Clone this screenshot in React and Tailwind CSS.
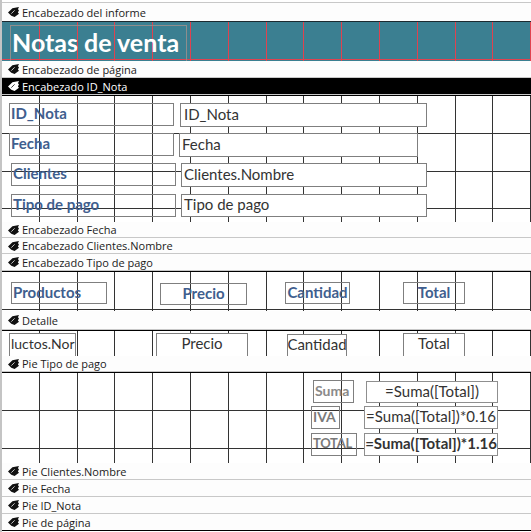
import React from 'react';

// x positions of the 1 cm grid lines (page coords, left strip is 2px)
const VX = [39, 77, 114, 152, 190, 228, 266, 303, 341, 379, 417, 455, 492, 530];

const Grid = ({ h, rows, color = '#333333' }) => (
  <svg className="absolute left-0 top-0 pointer-events-none" width="529" height={h}>
    {VX.map((x) => (
      <line key={'v' + x} x1={x - 2 + 0.5} y1="0" x2={x - 2 + 0.5} y2={h} stroke={color} strokeWidth="1" />
    ))}
    {rows.map((y) => (
      <line key={'h' + y} x1="0" y1={y + 0.5} x2="529" y2={y + 0.5} stroke={color} strokeWidth="1" />
    ))}
  </svg>
);

const SectionIcon = ({ white }) => (
  <svg width="11" height="10" viewBox="0 0 10 9" className="shrink-0">
    <path
      d="M0 5 L4 1 L10 0 L9 2 L10 3 L9 5 L10 6 L6 9 L3 8 Z"
      fill={white ? '#ffffff' : '#111111'}
    />
    <path d="M3 6 L6 3" stroke={white ? '#000000' : '#ffffff'} strokeWidth="0.7" />
  </svg>
);

const Bar = ({ children, className = '' }) => (
  <div className={'flex items-center gap-[3px] pl-[6px] bg-[#fdfdfd] text-[#1b1b1b] border-b border-[#c8c8c8] ' + className}>
    <SectionIcon />
    <span className="text-[11px] leading-none font-['Open_Sans',sans-serif]">{children}</span>
  </div>
);

// label and text box classes shared by the design canvas controls
const lbl = 'absolute border border-[#7f7f7f] flex items-center leading-none pb-[2px] font-bold whitespace-nowrap overflow-hidden';
const txt = 'absolute border border-[#7f7f7f] bg-white flex items-center leading-none pb-[2px] text-[15px] text-[#333] whitespace-nowrap overflow-hidden';

export default function App() {
  return (
    <div className="w-[531px] h-[532px] bg-white overflow-hidden border-l-2 border-[#c4c4c4] font-['Lato',sans-serif]">
      <div className="h-[2px] bg-white" />
      <Bar className="h-[19px] border-t border-t-[#c8c8c8] border-b-0">Encabezado del informe</Bar>

      {/* report header */}
      <div className="relative h-[40px] bg-[#3b7f91] border-t border-[#1c2a30] overflow-hidden">
        <Grid h={39} rows={[37]} color="#e0424f" />
        <div className="absolute left-[8px] top-[3px] w-[177px] h-[38px] border border-[#8d8d8d] flex items-center pl-[1px] pb-[3px]">
          <span className="text-white font-bold text-[25px] leading-none">Notas de venta</span>
        </div>
      </div>

      <Bar className="h-[17px]">Encabezado de página</Bar>
      <div className="flex items-center gap-[3px] pl-[6px] h-[17px] bg-black text-white border-b border-[#c8c8c8]">
        <SectionIcon white />
        <span className="text-[11px] leading-none font-['Open_Sans',sans-serif]">Encabezado ID_Nota</span>
      </div>

      {/* ID_Nota header */}
      <div className="relative h-[127px] bg-white border-t border-black overflow-hidden">
        <Grid h={126} rows={[37, 75, 112]} />
        <div className={lbl + ' left-[7px] top-[7px] w-[165px] h-[23px] pl-[1px] text-[15px] text-[#405e8e]'}>ID_Nota</div>
        <div className={txt + ' left-[178px] top-[7px] w-[247px] h-[24px] pl-[3px]'}>ID_Nota</div>
        <div className={lbl + ' left-[7px] top-[37px] w-[165px] h-[23px] pl-[1px] text-[15px] text-[#405e8e]'}>Fecha</div>
        <div className={txt + ' left-[177px] top-[37px] w-[239px] h-[24px] pl-[2px]'}>Fecha</div>
        <div className={lbl + ' left-[9px] top-[67px] w-[165px] h-[23px] pl-[1px] text-[15px] text-[#405e8e]'}>Clientes</div>
        <div className={txt + ' left-[179px] top-[67px] w-[246px] h-[24px] pl-[2px]'}>Clientes.Nombre</div>
        <div className={lbl + ' left-[9px] top-[98px] w-[165px] h-[23px] pl-[1px] text-[15px] text-[#405e8e]'}>Tipo de pago</div>
        <div className={txt + ' left-[179px] top-[98px] w-[246px] h-[23px] pl-[2px]'}>Tipo de pago</div>
      </div>

      <Bar className="h-[16px]">Encabezado Fecha</Bar>
      <Bar className="h-[16px]">Encabezado Clientes.Nombre</Bar>
      <Bar className="h-[17px]">Encabezado Tipo de pago</Bar>

      {/* Tipo de pago header */}
      <div className="relative h-[40px] bg-white border-t border-black overflow-hidden">
        <Grid h={39} rows={[37]} />
        <div className={lbl + ' left-[9px] top-[10px] w-[96px] h-[22px] pl-[1px] text-[15px] text-[#405e8e]'}>Productos</div>
        <div className={lbl + ' left-[158px] top-[11px] w-[87px] h-[22px] justify-center text-[15px] text-[#405e8e]'}>Precio</div>
        <div className={lbl + ' left-[283px] top-[10px] w-[65px] h-[22px] justify-center text-[15px] text-[#405e8e]'}>Cantidad</div>
        <div className={lbl + ' left-[401px] top-[10px] w-[62px] h-[22px] justify-center text-[15px] text-[#405e8e]'}>Total</div>
      </div>

      <Bar className="h-[19px]">Detalle</Bar>

      {/* detail */}
      <div className="relative h-[26px] bg-white border-t border-black overflow-hidden">
        <Grid h={25} rows={[]} />
        <div className={txt + ' left-[7px] top-[2px] w-[67px] h-[24px] pl-[1px] !text-[14px] pb-[3px]'}>luctos.Nor</div>
        <div className={txt + ' left-[154px] top-[2px] w-[92px] h-[24px] justify-center pb-[3px]'}>Precio</div>
        <div className={txt + ' left-[285px] top-[3px] w-[60px] h-[24px] justify-center pb-[4px]'}>Cantidad</div>
        <div className={txt + ' left-[401px] top-[2px] w-[62px] h-[24px] justify-center pb-[3px]'}>Total</div>
      </div>

      <Bar className="h-[16px]">Pie Tipo de pago</Bar>

      {/* Tipo de pago footer */}
      <div className="relative h-[91px] bg-white border-t border-black overflow-hidden">
        <Grid h={90} rows={[37, 75]} />
        <div className={lbl + ' left-[311px] top-[7px] w-[41px] h-[23px] pl-[1px] text-[14px] text-[#8a8a8a]'}>Suma</div>
        <div className={txt + ' left-[364px] top-[8px] w-[132px] h-[22px] justify-center border-[#8f8f8f]'}>=Suma([Total])</div>
        <div className={lbl + ' left-[309px] top-[33px] w-[29px] h-[23px] pl-[1px] text-[14px] text-[#7a7a7a]'}>IVA</div>
        <div className={txt + ' left-[362px] top-[33px] w-[134px] h-[23px] justify-center border-[#8f8f8f]'}>=Suma([Total])*0.16</div>
        <div className={lbl + ' left-[309px] top-[60px] w-[46px] h-[23px] pl-[1px] text-[13px] tracking-[-0.3px] text-[#7a7a7a]'}>TOTAL</div>
        <div className={txt + ' left-[362px] top-[60px] w-[134px] h-[23px] justify-center border-[#8f8f8f] font-bold'}>=Suma([Total])*1.16</div>
      </div>

      <Bar className="h-[17px]">Pie Clientes.Nombre</Bar>
      <Bar className="h-[17px]">Pie Fecha</Bar>
      <Bar className="h-[17px]">Pie ID_Nota</Bar>
      <Bar className="h-[17px] border-b-black">Pie de página</Bar>
    </div>
  );
}
